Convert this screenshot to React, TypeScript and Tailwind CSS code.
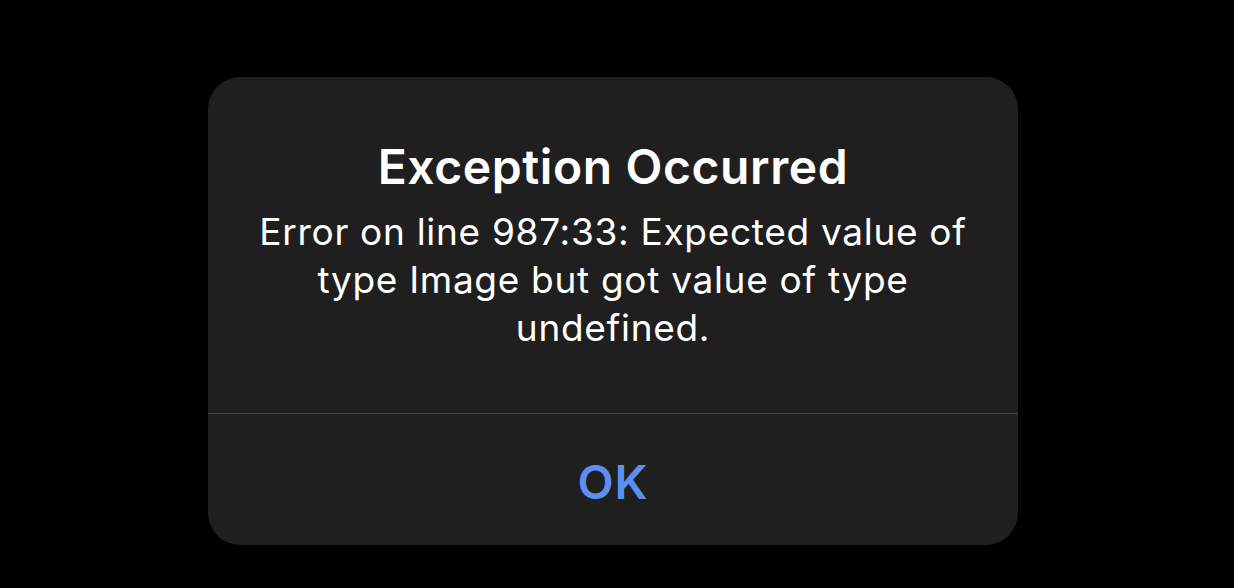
export default function App() {
  return (
    <div
      className="w-[1234px] h-[588px] bg-black pt-[77px] pl-[208px]"
      style={{ fontFamily: 'Inter, "Noto Sans", sans-serif' }}>
      <div className="w-[810px] h-[468px] bg-[#1f1f1f] rounded-[32px] flex flex-col overflow-hidden">
        <div className="flex flex-col items-center pt-[62px] pb-[61px] text-white text-center">
          <h1 className="text-[48px] leading-[56px] font-semibold tracking-[0.6px]">Exception Occurred</h1>
          <p className="mt-[13px] text-[37px] leading-[48px] w-[760px] tracking-[0.7px]">
            Error on line 987:33: Expected value of type Image but got value of type undefined.
          </p>
        </div>
        <div className="h-px bg-[#4a4a4a]" />
        <button className="flex-1 flex items-center justify-center pt-[6px] text-[47px] font-semibold tracking-[1px] text-[#5b8ff0]">
          OK
        </button>
      </div>
    </div>
  );
}
